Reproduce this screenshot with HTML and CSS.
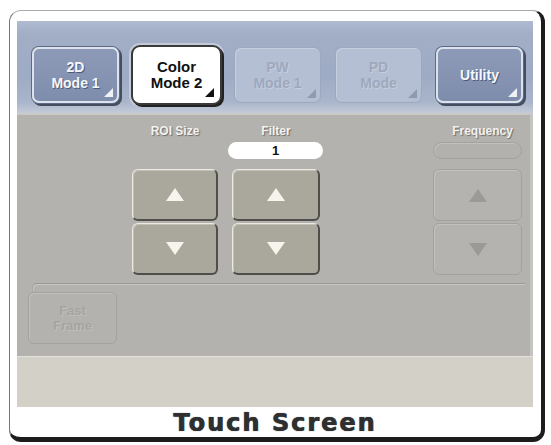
FILE: index.html
```html
<!DOCTYPE html>
<html lang="en">
<head>
<meta charset="utf-8">
<title>Touch Screen</title>
<link rel="stylesheet" href="styles.css">
</head>
<body>
<div class="frame">
  <div class="screen">
    <div class="modes">
      <div class="mode-btn blue">2D<br>Mode 1</div>
      <div class="mode-btn selected">Color<br>Mode 2</div>
      <div class="mode-btn off">PW<br>Mode 1</div>
      <div class="mode-btn off">PD<br>Mode</div>
      <div class="mode-btn blue">Utility</div>
    </div>
    <div class="controls">
      <div class="control-row">
        <div class="control roi">
          <div class="label">ROI Size</div>
          <div class="value none"></div>
          <div class="arrow-btn"><svg width="18" height="13" viewBox="0 0 18 13"><polygon points="9,0 18,13 0,13" fill="#f6f4ec"/></svg></div>
          <div class="arrow-btn"><svg width="18" height="13" viewBox="0 0 18 13"><polygon points="0,0 18,0 9,13" fill="#f6f4ec"/></svg></div>
        </div>
        <div class="control filter">
          <div class="label">Filter</div>
          <div class="value">1</div>
          <div class="arrow-btn"><svg width="18" height="13" viewBox="0 0 18 13"><polygon points="9,0 18,13 0,13" fill="#f6f4ec"/></svg></div>
          <div class="arrow-btn"><svg width="18" height="13" viewBox="0 0 18 13"><polygon points="0,0 18,0 9,13" fill="#f6f4ec"/></svg></div>
        </div>
        <div class="control freq">
          <div class="label">Frequency</div>
          <div class="value dim"></div>
          <div class="arrow-btn dim"><svg width="18" height="13" viewBox="0 0 18 13"><polygon points="9,0 18,13 0,13" fill="#9c9a95"/></svg></div>
          <div class="arrow-btn dim"><svg width="18" height="13" viewBox="0 0 18 13"><polygon points="0,0 18,0 9,13" fill="#9c9a95"/></svg></div>
        </div>
      </div>
      <div class="divider"></div>
      <div class="fast-frame">Fast<br>Frame</div>
    </div>
    <div class="status"></div>
  </div>
  <div class="caption">Touch Screen</div>
</div>
</body>
</html>
```
FILE: styles.css
```css
html, body {
  margin: 0;
  padding: 0;
  background: #ffffff;
}

body {
  font-family: "Liberation Sans", Arial, sans-serif;
}

/* outer bezel with a heavy shadowed right/bottom edge */
.frame {
  box-sizing: border-box;
  width: 536px;
  height: 432px;
  margin: 10px 0 0 9px;
  padding: 10px 8px 0 7px;
  background: #ffffff;
  border-style: solid;
  border-width: 1px 4px 5px 1px;
  border-color: #a9a9a9 #1c1c1c #1c1c1c #777777;
  border-radius: 12px;
  display: flex;
  flex-direction: column;
}

.screen {
  height: 386px;
  display: flex;
  flex-direction: column;
}

/* mode button bar */
.modes {
  box-sizing: border-box;
  height: 92px;
  padding: 26px 0 0 15px;
  display: flex;
  gap: 14px;
  background: linear-gradient(#b0bbd0 0, #a1aec6 14%, #9eabc4 60%, #a9b5cb 88%, #c4cbd9 100%);
}

.mode-btn {
  position: relative;
  box-sizing: border-box;
  width: 87px;
  height: 56px;
  border-radius: 7px;
  display: flex;
  align-items: center;
  justify-content: center;
  text-align: center;
  font-weight: bold;
  font-size: 14px;
  line-height: 16px;
}

.mode-btn::after {
  content: "";
  position: absolute;
  right: 4px;
  bottom: 4px;
  width: 0;
  height: 0;
  border-left: 9px solid transparent;
  border-bottom: 9px solid #eef1f6;
}

.mode-btn.blue {
  background: linear-gradient(#8d9ab7, #7f8dad);
  border: 2px solid #dde3ed;
  box-shadow: 0 0 0 1px #5f6a84, 2px 2px 0 1px #454d61;
  color: #f5f7fb;
  text-shadow: 1px 1px 0 #505b75;
}

.mode-btn.selected {
  background: #ffffff;
  border: 2px solid #ffffff;
  box-shadow: 0 0 0 2px #3a3a3a, 2px 2px 0 2px #222222, 0 0 0 4px #c3cad8;
  color: #111111;
  font-size: 15px;
}

.mode-btn.selected::after {
  border-bottom-color: #111111;
}

.mode-btn.off {
  background: #b4bfd4;
  border: 1px solid #9ca8bf;
  box-shadow: inset 1px 1px 0 #c7cfdd;
  color: #9ea9be;
  text-shadow: 1px 1px 0 #c6cddb;
}

.mode-btn.off::after {
  border-bottom-color: #8f9ab0;
}

/* main control panel */
.controls {
  box-sizing: border-box;
  height: 243px;
  background: #b4b2ae;
  border-top: 2px solid #cbc9c5;
  border-right: 3px solid #c6c4c0;
  padding-top: 9px;
  display: flex;
  flex-direction: column;
}

.control-row {
  display: flex;
  padding-left: 115px;
  gap: 14px;
}

.control {
  display: flex;
  flex-direction: column;
  align-items: stretch;
}

.control.roi { width: 86px; }
.control.filter { width: 88px; }
.control.freq {
  width: 89px;
  margin-left: auto;
  margin-right: 8px;
}

.label {
  height: 14px;
  line-height: 14px;
  font-size: 12px;
  font-weight: bold;
  text-align: center;
  color: #f2f2f0;
  text-shadow: 1px 1px 1px #6d6b67;
  white-space: nowrap;
}

.freq .label {
  padding-left: 10px;
}

.value {
  box-sizing: border-box;
  height: 17px;
  margin: 4px -3px 0 -4px;
  border-radius: 9px;
  background: #ffffff;
  font-size: 13px;
  font-weight: bold;
  line-height: 17px;
  text-align: center;
  color: #111111;
}

.value.none {
  visibility: hidden;
}

.value.dim {
  margin: 4px 0 0 0;
  background: #b3b1ad;
  border: 1px solid #a3a19d;
  box-shadow: inset 1px 1px 0 #c3c1bd;
}

.arrow-btn {
  box-sizing: border-box;
  height: 52px;
  border-radius: 6px;
  background: #aaa79c;
  border-style: solid;
  border-width: 1px 2px 2px 1px;
  border-color: #ebe9e2 #4f4e4a #4f4e4a #ebe9e2;
  box-shadow: inset 1px 1px 0 #c2bfb5;
  display: flex;
  align-items: center;
  justify-content: center;
}

.value + .arrow-btn {
  margin-top: 10px;
}

.arrow-btn + .arrow-btn {
  margin-top: 2px;
}

.arrow-btn.dim {
  background: #b5b3af;
  border-width: 1px;
  border-color: #a3a19d;
  box-shadow: inset 1px 1px 0 #c4c2be;
}

.divider {
  height: 6px;
  margin: 8px 5px 0 15px;
  border-top: 1px solid #9a9893;
  border-left: 1px solid #a6a49f;
  border-top-left-radius: 5px;
  box-shadow: inset 1px 1px 0 #cac8c3;
}

.fast-frame {
  box-sizing: border-box;
  width: 89px;
  height: 52px;
  margin: 2px 0 0 11px;
  border-radius: 6px;
  border: 1px solid #a4a29e;
  box-shadow: inset 1px 1px 0 #c3c1bd;
  display: flex;
  align-items: center;
  justify-content: center;
  text-align: center;
  font-size: 13px;
  font-weight: bold;
  line-height: 15px;
  color: #a6a4a0;
  text-shadow: 1px 1px 0 #c2c0bc;
}

.status {
  flex: 1;
  background: #d3d0c7;
  border-top: 1px solid #e3e1da;
}

.caption {
  flex: 1;
  display: flex;
  align-items: center;
  justify-content: center;
  font-family: "DejaVu Sans", Verdana, sans-serif;
  font-weight: bold;
  font-size: 24px;
  letter-spacing: 2px;
  color: #2f2f2f;
  text-shadow: 0 0 1px #555555, 0.5px 0 0 #2f2f2f;
  padding-top: 1px;
}
```
